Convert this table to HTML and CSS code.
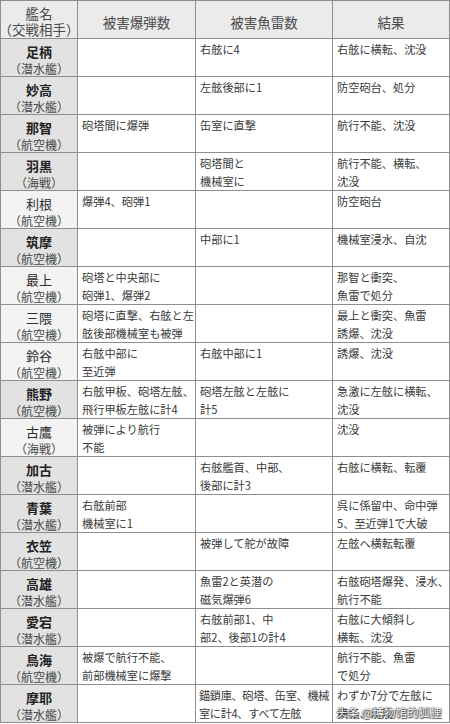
FILE: index.html
```html
<!DOCTYPE html>
<html lang="ja">
<head>
<meta charset="utf-8">
<title>艦名 被害</title>
<link rel="stylesheet" href="styles.css">
</head>
<body>
<div class="sheet">
  <div class="grid">
    <div class="hd hd-name"><span>艦名</span><span><span class="pp">（</span>交戦相手<span class="pp">）</span></span></div>
    <div class="hd">被害爆弾数</div>
    <div class="hd">被害魚雷数</div>
    <div class="hd">結果</div>

    <div class="nm strong"><b>足柄</b><span><span class="pp">（</span>潜水艦<span class="pp">）</span></span></div>
    <div class="c"></div>
    <div class="c">右舷に4</div>
    <div class="c">右舷に横転、沈没</div>

    <div class="nm strong"><b>妙高</b><span><span class="pp">（</span>潜水艦<span class="pp">）</span></span></div>
    <div class="c"></div>
    <div class="c">左舷後部に1</div>
    <div class="c">防空砲台、処分</div>

    <div class="nm strong"><b>那智</b><span><span class="pp">（</span>航空機<span class="pp">）</span></span></div>
    <div class="c">砲塔間に爆弾</div>
    <div class="c">缶室に直撃</div>
    <div class="c">航行不能、沈没</div>

    <div class="nm strong"><b>羽黒</b><span><span class="pp">（</span>海戦<span class="pp">）</span></span></div>
    <div class="c"></div>
    <div class="c">砲塔間と<br>機械室に</div>
    <div class="c">航行不能、横転、<br>沈没</div>

    <div class="nm light"><b>利根</b><span><span class="pp">（</span>航空機<span class="pp">）</span></span></div>
    <div class="c">爆弾4、砲弾1</div>
    <div class="c"></div>
    <div class="c">防空砲台</div>

    <div class="nm strong"><b>筑摩</b><span><span class="pp">（</span>航空機<span class="pp">）</span></span></div>
    <div class="c"></div>
    <div class="c">中部に1</div>
    <div class="c">機械室浸水、自沈</div>

    <div class="nm light"><b>最上</b><span><span class="pp">（</span>航空機<span class="pp">）</span></span></div>
    <div class="c">砲塔と中央部に<br>砲弾1、爆弾2</div>
    <div class="c"></div>
    <div class="c">那智と衝突、<br>魚雷で処分</div>

    <div class="nm light"><b>三隈</b><span><span class="pp">（</span>航空機<span class="pp">）</span></span></div>
    <div class="c">砲塔に直撃、右舷と左<br>舷後部機械室も被弾</div>
    <div class="c"></div>
    <div class="c">最上と衝突、魚雷<br>誘爆、沈没</div>

    <div class="nm light"><b>鈴谷</b><span><span class="pp">（</span>航空機<span class="pp">）</span></span></div>
    <div class="c">右舷中部に<br>至近弾</div>
    <div class="c">右舷中部に1</div>
    <div class="c">誘爆、沈没</div>

    <div class="nm strong"><b>熊野</b><span><span class="pp">（</span>航空機<span class="pp">）</span></span></div>
    <div class="c">右舷甲板、砲塔左舷、<br>飛行甲板左舷に計4</div>
    <div class="c">砲塔左舷と左舷に<br>計5</div>
    <div class="c">急激に左舷に横転、<br>沈没</div>

    <div class="nm light"><b>古鷹</b><span><span class="pp">（</span>海戦<span class="pp">）</span></span></div>
    <div class="c">被弾により航行<br>不能</div>
    <div class="c"></div>
    <div class="c">沈没</div>

    <div class="nm strong"><b>加古</b><span><span class="pp">（</span>潜水艦<span class="pp">）</span></span></div>
    <div class="c"></div>
    <div class="c">右舷艦首、中部、<br>後部に計3</div>
    <div class="c">右舷に横転、転覆</div>

    <div class="nm strong"><b>青葉</b><span><span class="pp">（</span>潜水艦<span class="pp">）</span></span></div>
    <div class="c">右舷前部<br>機械室に1</div>
    <div class="c"></div>
    <div class="c">呉に係留中、命中弾<br>5、至近弾1で大破</div>

    <div class="nm strong"><b>衣笠</b><span><span class="pp">（</span>航空機<span class="pp">）</span></span></div>
    <div class="c"></div>
    <div class="c">被弾して舵が故障</div>
    <div class="c">左舷へ横転転覆</div>

    <div class="nm strong"><b>高雄</b><span><span class="pp">（</span>潜水艦<span class="pp">）</span></span></div>
    <div class="c"></div>
    <div class="c">魚雷2と英潜の<br>磁気爆弾6</div>
    <div class="c">右舷砲塔爆発、浸水、<br>航行不能</div>

    <div class="nm strong"><b>愛宕</b><span><span class="pp">（</span>潜水艦<span class="pp">）</span></span></div>
    <div class="c"></div>
    <div class="c">右舷前部1、中<br>部2、後部1の計4</div>
    <div class="c">右舷に大傾斜し<br>横転、沈没</div>

    <div class="nm strong"><b>鳥海</b><span><span class="pp">（</span>航空機<span class="pp">）</span></span></div>
    <div class="c">被爆で航行不能、<br>前部機械室に爆撃</div>
    <div class="c"></div>
    <div class="c">航行不能、魚雷<br>で処分</div>

    <div class="nm strong"><b>摩耶</b><span><span class="pp">（</span>潜水艦<span class="pp">）</span></span></div>
    <div class="c"></div>
    <div class="c tight">錨鎖庫、砲塔、缶室、機械<br>室に計4、すべて左舷</div>
    <div class="c">わずか7分で左舷に<br>横転、沈没</div>
  </div>
  <div class="mark">头条 @博物馆的狐狸</div>
</div>
</body>
</html>
```

FILE: styles.css
```css
html, body {
  margin: 0;
  padding: 0;
  background: #ffffff;
}
body {
  width: 450px;
  height: 724px;
  overflow: hidden;
  font-family: "Noto Sans CJK JP", "Noto Sans", sans-serif;
  color: #3a3a3a;
}
.sheet {
  position: relative;
  width: 450px;
}
.grid {
  display: grid;
  grid-template-columns: 76px 117px 136px 116px;
  grid-auto-rows: 37px;
  gap: 1px;
  padding: 1px;
  background: #8e8e8e;
}
.grid > div {
  background: #ffffff;
  overflow: hidden;
  white-space: nowrap;
}
.pp {
  font-feature-settings: "halt";
}
.hd {
  background: #ebebeb !important;
  display: flex;
  align-items: center;
  justify-content: center;
  font-size: 13.5px;
  color: #4a4a4a;
  padding-top: 4px;
  box-sizing: border-box;
}
.grid > .hd-name {
  flex-direction: column;
  justify-content: flex-start;
  line-height: 16px;
  padding-top: 4px;
  font-size: 13.5px;
}
.hd-name > span {
  display: block;
}
.nm {
  display: flex;
  flex-direction: column;
  align-items: center;
  padding-top: 5px;
  box-sizing: border-box;
  line-height: 16px;
}
.nm b {
  display: block;
  height: 16px;
  font-size: 13px;
  font-weight: 400;
  color: #2e2e2e;
}
.nm > span {
  display: block;
  height: 16px;
  margin-top: 1px;
  font-size: 12px;
  color: #4a4a4a;
}
.nm.strong {
  background: #e2e2e2 !important;
}
.nm.strong b {
  font-weight: 700;
  color: #222222;
}
.nm.light {
  background: #f3f3f3 !important;
}
.c {
  font-size: 11.2px;
  line-height: 18px;
  padding: 1px 0 0 4px;
  box-sizing: border-box;
}
.c.tight {
  letter-spacing: -0.35px;
  padding-left: 3px;
}
.mark {
  position: absolute;
  left: 336px;
  top: 705px;
  font-family: "Noto Sans CJK SC", sans-serif;
  font-size: 11.5px;
  line-height: 14px;
  color: #ffffff;
  text-shadow: 0 0 1px #333, 0 0 1px #333, 1px 1px 1px #444;
  white-space: nowrap;
}
```
